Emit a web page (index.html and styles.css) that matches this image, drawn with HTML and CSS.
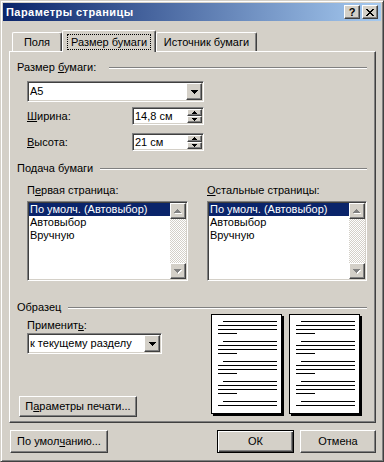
FILE: index.html
```html
<!DOCTYPE html>
<html lang="ru">
<head>
<meta charset="utf-8">
<title>Параметры страницы</title>
<link rel="stylesheet" href="styles.css">
</head>
<body>
<div class="window">
  <div class="titlebar">
    <span class="title-text">Параметры страницы</span>
    <span class="cap-btn help">?</span>
    <span class="cap-btn close"><svg width="8" height="7" viewBox="0 0 8 7"><path d="M0 0h2v1h-2zM6 0h2v1h-2zM1 1h2v1h-2zM5 1h2v1h-2zM2 2h4v1h-4zM3 3h2v1h-2zM2 4h4v1h-4zM1 5h2v1h-2zM5 5h2v1h-2zM0 6h2v1h-2zM6 6h2v1h-2z"/></svg></span>
  </div>

  <div class="tabs">
    <div class="tab tab-fields">Поля</div>
    <div class="tab tab-active"><span class="focus">Размер бумаги</span></div>
    <div class="tab tab-source">Источник бумаги</div>
  </div>

  <div class="panel">
    <div class="group-head"><span>Размер <u>б</u>умаги:</span><span class="etch etch-wide"></span></div>
    <div class="indent">
      <div class="combo combo-size">
        <span class="combo-text">A5</span>
        <span class="drop-btn"><svg width="7" height="4" viewBox="0 0 7 4"><path d="M0 0h7v1h-1v1h-1v1h-1v1h-1v-1h-1v-1h-1v-1h-1z"/></svg></span>
      </div>
      <div class="field-row first">
        <span class="field-label"><u>Ш</u>ирина:</span>
        <div class="spin">
          <span class="spin-text">14,8 см</span>
          <span class="spin-btns">
            <span class="spin-btn"><svg width="5" height="3" viewBox="0 0 5 3"><path d="M0 3h5v-1h-1v-1h-1v-1h-1v1h-1v1h-1z"/></svg></span>
            <span class="spin-btn"><svg width="5" height="3" viewBox="0 0 5 3"><path d="M0 0h5v1h-1v1h-1v1h-1v-1h-1v-1h-1z"/></svg></span>
          </span>
        </div>
      </div>
      <div class="field-row">
        <span class="field-label"><u>В</u>ысота:</span>
        <div class="spin">
          <span class="spin-text">21 см</span>
          <span class="spin-btns">
            <span class="spin-btn"><svg width="5" height="3" viewBox="0 0 5 3"><path d="M0 3h5v-1h-1v-1h-1v-1h-1v1h-1v1h-1z"/></svg></span>
            <span class="spin-btn"><svg width="5" height="3" viewBox="0 0 5 3"><path d="M0 0h5v1h-1v1h-1v1h-1v-1h-1v-1h-1z"/></svg></span>
          </span>
        </div>
      </div>
    </div>

    <div class="group-head gh2"><span>Подача бумаги</span><span class="etch"></span></div>
    <div class="lists">
      <div class="list-col col-left">
        <div class="list-label">П<u>е</u>рвая страница:</div>
        <div class="listbox">
          <div class="list-items">
            <div class="item selected">По умолч. (Автовыбор)</div>
            <div class="item">Автовыбор</div>
            <div class="item">Вручную</div>
          </div>
          <div class="scrollbar">
            <span class="sb-btn"><svg width="8" height="5" viewBox="0 0 8 5"><path fill="#fff" d="M1 5h7v-1h-1v-1h-1v-1h-1v-1h-1v1h-1v1h-1v1h-1z"/><path fill="#808080" d="M0 4h7v-1h-1v-1h-1v-1h-1v-1h-1v1h-1v1h-1v1h-1z"/></svg></span>
            <span class="sb-track"></span>
            <span class="sb-btn"><svg width="8" height="5" viewBox="0 0 8 5"><path fill="#fff" d="M1 1h7v1h-1v1h-1v1h-1v1h-1v-1h-1v-1h-1v-1h-1z"/><path fill="#808080" d="M0 0h7v1h-1v1h-1v1h-1v1h-1v-1h-1v-1h-1v-1h-1z"/></svg></span>
          </div>
        </div>
      </div>
      <div class="list-col col-right">
        <div class="list-label"><u>О</u>стальные страницы:</div>
        <div class="listbox">
          <div class="list-items">
            <div class="item selected">По умолч. (Автовыбор)</div>
            <div class="item">Автовыбор</div>
            <div class="item">Вручную</div>
          </div>
          <div class="scrollbar">
            <span class="sb-btn"><svg width="8" height="5" viewBox="0 0 8 5"><path fill="#fff" d="M1 5h7v-1h-1v-1h-1v-1h-1v-1h-1v1h-1v1h-1v1h-1z"/><path fill="#808080" d="M0 4h7v-1h-1v-1h-1v-1h-1v-1h-1v1h-1v1h-1v1h-1z"/></svg></span>
            <span class="sb-track"></span>
            <span class="sb-btn"><svg width="8" height="5" viewBox="0 0 8 5"><path fill="#fff" d="M1 1h7v1h-1v1h-1v1h-1v1h-1v-1h-1v-1h-1v-1h-1z"/><path fill="#808080" d="M0 0h7v1h-1v1h-1v1h-1v1h-1v-1h-1v-1h-1v-1h-1z"/></svg></span>
          </div>
        </div>
      </div>
    </div>

    <div class="group-head gh3"><span>Образец</span><span class="etch"></span></div>
    <div class="sample">
      <div class="sample-left">
        <div class="apply-label">Применит<u>ь</u>:</div>
        <div class="combo combo-apply">
          <span class="combo-text">к текущему разделу</span>
          <span class="drop-btn"><svg width="7" height="4" viewBox="0 0 7 4"><path d="M0 0h7v1h-1v1h-1v1h-1v1h-1v-1h-1v-1h-1v-1h-1z"/></svg></span>
        </div>
        <button class="btn btn-print" type="button">П<u>а</u>раметры печати...</button>
      </div>
      <div class="pages">
        <svg class="page" width="73" height="102" viewBox="0 0 73 102" shape-rendering="crispEdges">
          <defs>
            <g id="para">
              <rect x="12" y="0" width="54" height="1"/>
              <rect x="7" y="4" width="59" height="1"/>
              <rect x="7" y="8" width="59" height="1"/>
              <rect x="7" y="12" width="19" height="1"/>
            </g>
            <g id="para-end">
              <rect x="12" y="0" width="54" height="1"/>
              <rect x="7" y="4" width="59" height="1"/>
            </g>
          </defs>
          <rect x="2" y="2" width="71" height="100" fill="#000"/>
          <rect x="0.5" y="0.5" width="70" height="99" fill="#fff" stroke="#000"/>
          <use href="#para" y="7"/>
          <use href="#para" y="27"/>
          <use href="#para" y="47"/>
          <use href="#para" y="67"/>
          <use href="#para-end" y="87"/>
        </svg>
        <svg class="page" width="73" height="102" viewBox="0 0 73 102" shape-rendering="crispEdges">
          <rect x="2" y="2" width="71" height="100" fill="#000"/>
          <rect x="0.5" y="0.5" width="70" height="99" fill="#fff" stroke="#000"/>
          <use href="#para" y="7"/>
          <use href="#para" y="27"/>
          <use href="#para" y="47"/>
          <use href="#para" y="67"/>
          <use href="#para-end" y="87"/>
        </svg>
      </div>
    </div>
  </div>

  <div class="footer">
    <button class="btn btn-defaults" type="button">По умол<u>ч</u>анию...</button>
    <button class="btn btn-ok" type="button">ОК</button>
    <button class="btn btn-cancel" type="button">Отмена</button>
  </div>
</div>
</body>
</html>
```

FILE: styles.css
```css
* { box-sizing: border-box; }
html, body { margin: 0; padding: 0; }
body {
  width: 384px;
  height: 462px;
  overflow: hidden;
  background: #d4d0c8;
  font-family: "Liberation Sans", Arial, sans-serif;
  font-size: 11px;
  line-height: 13px;
  color: #000;
}
u { text-decoration: underline; text-underline-offset: 1px; }
svg { display: block; }

/* window frame */
.window {
  width: 384px;
  height: 462px;
  display: flex;
  flex-direction: column;
  background: #d4d0c8;
  border: 1px solid;
  border-color: #d4d0c8 #404040 #404040 #d4d0c8;
  box-shadow: inset 1px 1px #fff, inset -1px -1px #808080;
  padding: 2px;
}

/* title bar */
.titlebar {
  flex: none;
  height: 18px;
  display: flex;
  align-items: center;
  gap: 2px;
  padding: 0 3px 0 3px;
  background: linear-gradient(to right, #0a246a, #a6caf0);
}
.title-text {
  flex: 1;
  color: #fff;
  font-weight: bold;
  font-size: 11px;
  letter-spacing: 0.45px;
  white-space: nowrap;
}
.cap-btn {
  width: 16px;
  height: 14px;
  display: flex;
  align-items: center;
  justify-content: center;
  background: #d4d0c8;
  border: 1px solid;
  border-color: #fff #404040 #404040 #fff;
  box-shadow: inset -1px -1px #808080;
}
.help { font-weight: bold; font-size: 11px; line-height: 12px; }

/* tabs */
.tabs {
  flex: none;
  display: flex;
  align-items: flex-end;
  height: 21px;
  margin-top: 9px;
  padding-left: 9px;
}
.tab {
  height: 19px;
  padding-top: 3px;
  text-align: center;
  white-space: nowrap;
  background: #d4d0c8;
  border-top: 1px solid #fff;
  border-left: 1px solid #fff;
  border-right: 1px solid #404040;
  box-shadow: inset -1px 0 #808080;
  border-radius: 2px 2px 0 0;
}
.tab-fields { width: 50px; }
.tab-active {
  width: 94px;
  height: 22px;
  margin-bottom: -1px;
  position: relative;
  z-index: 1;
  padding-top: 3px;
}
.tab-source { width: 101px; }
.focus {
  display: inline-block;
  border: 1px dotted #000;
  padding: 1px 3px 0;
}

/* tab panel */
.panel {
  flex: none;
  width: 367px;
  height: 372px;
  margin-left: 6px;
  border: 1px solid;
  border-color: #fff #404040 #404040 #fff;
  box-shadow: inset -1px -1px #808080;
  padding: 9px 8px 0 7px;
}
.group-head {
  display: flex;
  align-items: center;
  height: 13px;
  white-space: nowrap;
}
.etch {
  flex: 1;
  height: 2px;
  border-top: 1px solid #808080;
  border-bottom: 1px solid #fff;
  margin-left: 7px;
}
.etch-wide { margin-left: 13px; }
.indent { padding-left: 10px; }

/* sunken controls */
.combo, .spin, .listbox {
  background: #fff;
  border: 1px solid;
  border-color: #808080 #fff #fff #808080;
  box-shadow: inset 1px 1px #404040, inset -1px -1px #d4d0c8;
  padding: 1px;
}
.combo { display: flex; height: 21px; }
.combo-size { width: 177px; margin-top: 7px; }
.combo-text { flex: 1; padding-left: 1px; line-height: 17px; white-space: nowrap; }
.drop-btn, .spin-btn, .sb-btn {
  display: flex;
  align-items: center;
  justify-content: center;
  background: #d4d0c8;
  border: 1px solid;
  border-color: #fff #404040 #404040 #fff;
  box-shadow: inset -1px -1px #808080;
}
.drop-btn { width: 16px; }

.field-row { display: flex; align-items: center; height: 18px; margin-top: 8px; }
.field-row.first { margin-top: 5px; }
.field-label { width: 105px; }
.spin { width: 72px; height: 18px; display: flex; }
.spin-text { flex: 1; padding-left: 1px; line-height: 14px; white-space: nowrap; }
.spin-btns { width: 15px; display: flex; flex-direction: column; }
.spin-btn { flex: 1; }

/* paper source lists */
.gh2 { margin-top: 11px; }
.lists {
  display: flex;
  justify-content: space-between;
  padding-left: 10px;
  margin-top: 9px;
}
.col-left { width: 161px; }
.col-right { width: 160px; }
.listbox { margin-top: 4px; height: 80px; display: flex; }
.list-items { flex: 1; min-width: 0; }
.item { height: 13px; padding-left: 1px; white-space: nowrap; }
.item.selected { background: #0a246a; color: #fff; }
.scrollbar { width: 16px; display: flex; flex-direction: column; }
.sb-btn { height: 16px; flex: none; }
.sb-track {
  flex: 1;
  background-color: #fff;
  background-image: conic-gradient(#d4d0c8 25%, #fff 0 50%, #d4d0c8 0 75%, #fff 0);
  background-size: 2px 2px;
}

/* sample */
.gh3 { margin-top: 20px; }
.sample { display: flex; }
.sample-left { flex: 1; }
.apply-label { margin: 5px 0 0 10px; }
.combo-apply { width: 135px; margin: 1px 0 0 10px; }
.pages { display: flex; gap: 5px; margin-right: 5px; }

/* buttons */
.btn {
  font: inherit;
  color: #000;
  background: #d4d0c8;
  border: 1px solid;
  border-color: #fff #404040 #404040 #fff;
  box-shadow: inset -1px -1px #808080;
  padding: 0;
  margin: 0;
  display: flex;
  align-items: center;
  justify-content: center;
  white-space: nowrap;
  height: 23px;
}
.btn-print { width: 118px; height: 21px; margin: 42px 0 0 2px; }

.footer {
  flex: none;
  display: flex;
  height: 23px;
  margin-top: 7px;
  padding: 0 5px 0 7px;
}
.btn-defaults { width: 98px; }
.btn-ok {
  width: 77px;
  margin-left: auto;
  border-color: #000;
  box-shadow: inset 1px 1px #fff, inset -1px -1px #404040, inset -2px -2px #808080;
}
.btn-cancel { width: 76px; margin-left: 6px; }
```
